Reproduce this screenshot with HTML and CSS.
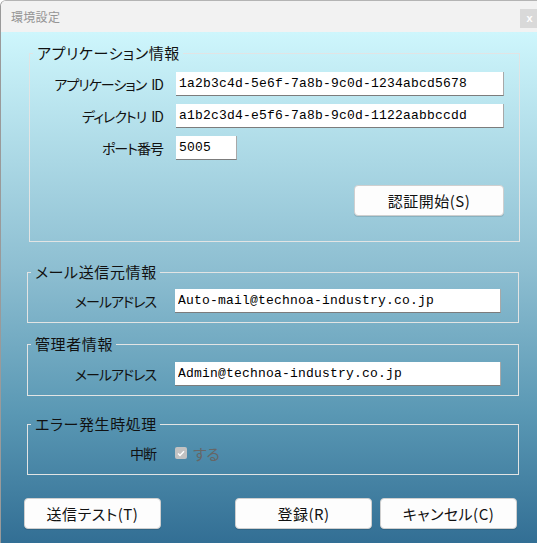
FILE: index.html
```html
<!DOCTYPE html>
<html lang="ja">
<head>
  <meta charset="UTF-8">
  <title>環境設定</title>
  <link rel="stylesheet" href="styles.css">
</head>
<body>

<div class="window">
  <div class="title-bar">
    <span class="title">環境設定</span>
    <span class="close-btn">x</span>
  </div>

  <div class="content">
    <!-- アプリケーション情報 -->
    <fieldset class="group group-app">
      <legend>アプリケーション情報</legend>
      <div class="row">
        <label class="label">アプリケーション ID</label>
        <input type="text" class="text-input wide" value="1a2b3c4d-5e6f-7a8b-9c0d-1234abcd5678">
      </div>
      <div class="row">
        <label class="label">ディレクトリ ID</label>
        <input type="text" class="text-input wide" value="a1b2c3d4-e5f6-7a8b-9c0d-1122aabbccdd">
      </div>
      <div class="row">
        <label class="label">ポート番号</label>
        <input type="text" class="text-input port" value="5005">
      </div>
      <div class="auth-row">
        <button class="btn auth-btn">認証開始(S)</button>
      </div>
    </fieldset>

    <!-- メール送信元情報 -->
    <fieldset class="group group-sender">
      <legend>メール送信元情報</legend>
      <div class="row">
        <label class="label">メールアドレス</label>
        <input type="text" class="text-input mail" value="Auto-mail@technoa-industry.co.jp">
      </div>
    </fieldset>

    <!-- 管理者情報 -->
    <fieldset class="group group-admin">
      <legend>管理者情報</legend>
      <div class="row">
        <label class="label">メールアドレス</label>
        <input type="text" class="text-input mail" value="Admin@technoa-industry.co.jp">
      </div>
    </fieldset>

    <!-- エラー発生時処理 -->
    <fieldset class="group group-error">
      <legend>エラー発生時処理</legend>
      <div class="row">
        <label class="label">中断</label>
        <span class="check">
          <span class="check-box">
            <svg width="8" height="7" viewBox="0 0 8 7"><path d="M1 3.5 L3 5.5 L7 1.2" fill="none" stroke="#fff" stroke-width="1.4"/></svg>
          </span>
          <span class="check-text">する</span>
        </span>
      </div>
    </fieldset>

    <div class="footer">
      <button class="btn">送信テスト(T)</button>
      <button class="btn btn-save">登録(R)</button>
      <button class="btn btn-cancel">キャンセル(C)</button>
    </div>
  </div>
</div>

</body>
</html>
```

FILE: styles.css
```css
* {
  margin: 0;
  padding: 0;
  box-sizing: border-box;
}

html, body {
  width: 537px;
  height: 543px;
  overflow: hidden;
  background: #fff;
}

body {
  font-family: 'Noto Sans CJK JP', sans-serif;
  font-feature-settings: "palt";
  color: #111;
}

.window {
  width: 548px;
  height: 560px;
  border-top: 1px solid #b4b4b4;
  border-left: 1px solid #9a9a9a;
  border-radius: 6px 0 0 0;
  overflow: hidden;
}

/* タイトルバー */
.title-bar {
  height: 31px;
  background: #f2f2f2;
  display: flex;
  align-items: center;
  justify-content: space-between;
  padding-left: 10px;
}

.title {
  font-size: 12px;
  color: #959595;
  letter-spacing: 0.3px;
}

.close-btn {
  align-self: flex-start;
  width: 19px;
  height: 19px;
  margin-right: 9px;
  margin-top: 8px;
  background: #d9d9d9;
  color: #fff;
  font-family: 'Liberation Sans', sans-serif;
  font-weight: bold;
  font-size: 11px;
  line-height: 18px;
  text-align: center;
}

/* 本体 */
.content {
  height: 529px;
  background: linear-gradient(#cef6fc 0%, #8dbed1 45%, #5a98b4 72%, #2d6990 100%);
  padding-top: 11px;
}

.group {
  border: 1px solid #e2e4e4;
  margin-left: 26px;
  width: 492px;
  padding: 0 0 9px 0;
}

.group legend {
  font-size: 15px;
  line-height: 20px;
  letter-spacing: 0.6px;
  margin-left: 3px;
  padding: 0 3px 0 4px;
}

.group-app {
  margin-left: 28px;
  width: 491px;
  padding: 9px 0 25px 0;
}

.group-sender {
  margin-top: 20px;
  padding-top: 7px;
}

.group-admin {
  margin-top: 11px;
  padding-top: 8px;
}

.group-error {
  margin-top: 18px;
  padding-top: 7px;
}

.row {
  display: flex;
  align-items: center;
  height: 24px;
}

.row + .row {
  margin-top: 8px;
}

.label {
  flex: 0 0 147px;
  padding-right: 19px;
  text-align: right;
  font-size: 14px;
  letter-spacing: -1px;
  word-spacing: 3px;
  line-height: 24px;
}

.group-app .label {
  flex-basis: 146px;
  padding-right: 13px;
}

.text-input {
  height: 24px;
  border: none;
  border-bottom: 1px solid #7c7c7c;
  border-right: 1px solid #a8a8a8;
  background: #fff;
  font-family: 'Liberation Mono', monospace;
  font-size: 13px;
  letter-spacing: 0.2px;
  color: #000;
  padding: 0 3px;
  outline: none;
}

.wide {
  width: 328px;
}

.port {
  width: 61px;
}

.mail {
  width: 326px;
}

.auth-row {
  display: flex;
  justify-content: flex-end;
  padding-right: 15px;
  margin-top: 25px;
}

.btn {
  height: 31px;
  width: 137px;
  background: #fdfdfd;
  border: 1px solid #cfcfcf;
  border-radius: 4px;
  box-shadow: 0 1px 0 rgba(0, 0, 0, 0.12);
  font-family: 'Noto Sans CJK JP', sans-serif;
  font-feature-settings: "palt";
  font-size: 15px;
  letter-spacing: 0.5px;
  color: #111;
  cursor: pointer;
}

.auth-btn {
  width: 150px;
}

/* チェックボックス */
.check {
  display: flex;
  align-items: center;
  gap: 6px;
}

.check-box {
  width: 12px;
  height: 12px;
  border-radius: 2px;
  background: #c2c2c2;
  display: flex;
  align-items: center;
  justify-content: center;
}

.check-text {
  font-size: 15px;
  color: #666;
}

/* 下部ボタン */
.footer {
  display: flex;
  padding-left: 23px;
  margin-top: 23px;
}

.btn-save {
  margin-left: 74px;
}

.btn-cancel {
  margin-left: 8px;
}
```
